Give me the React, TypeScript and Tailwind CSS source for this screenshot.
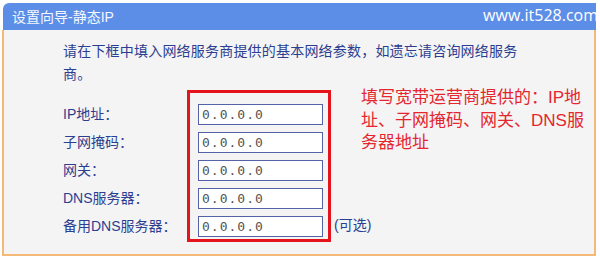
const fields = [
  { label: 'IP地址：', value: '0.0.0.0' },
  { label: '子网掩码：', value: '0.0.0.0' },
  { label: '网关：', value: '0.0.0.0' },
  { label: 'DNS服务器：', value: '0.0.0.0' },
  { label: '备用DNS服务器：', value: '0.0.0.0' },
]

const cjk = { fontFamily: '"Liberation Sans", "Noto Sans CJK SC", sans-serif' }

export default function App() {
  return (
    <div className="w-[600px] h-[257px] bg-white overflow-hidden" style={cjk}>
      <div className="ml-[2px] mt-[3px] w-[594px]">
        <div className="h-[27px] ml-[1px] flex items-center justify-between bg-[#5d8ee7] rounded-tl-[6px] pl-[9px]">
          <span className="text-[14px] text-[#f4f7ff] leading-none">设置向导-静态IP</span>
          <span
            className="text-[16px] text-white leading-none -mt-[4px] mr-[-2px]"
            style={{ fontFamily: '"Open Sans", sans-serif' }}
          >
            www.it528.com
          </span>
        </div>

        <div className="bg-[#f4f4f4] border-x-2 border-b-2 border-[#f5b977] pl-[59px] pt-[10px] pb-[12px]">
          <p className="text-[14px] leading-[23px] text-[#2b3e91] tracking-[0.2px]">
            请在下框中填入网络服务商提供的基本网络参数，如遗忘请咨询网络服务
            <br />
            商。
          </p>

          <div className="flex items-start mt-[4px]">
            <div className="w-[124px] pt-[14px] flex flex-col gap-[7px]">
              {fields.map((f) => (
                <div key={f.label} className="h-[21px] flex items-center text-[14px] text-[#2b3e91]">
                  {f.label}
                </div>
              ))}
            </div>

            <div className="border-[3px] border-[#e5141c] pt-[11px] pb-[2px] pl-[8px] pr-[5px] flex flex-col gap-[7px]">
              {fields.map((f) => (
                <div
                  key={f.label}
                  className="w-[125px] h-[21px] border-[1.5px] border-[#5462a8] bg-white flex items-center pl-[3px] text-[13px] text-[#555] tracking-[1px]"
                  style={{ fontFamily: '"DejaVu Sans Mono", monospace' }}
                >
                  {f.value}
                </div>
              ))}
            </div>

            <div className="flex flex-col self-stretch justify-between pl-[3px] pb-[6px]">
              <div className="pl-[27px] -mt-[3px] text-[17px] leading-[22.5px] text-[#e5262f] whitespace-nowrap">
                填写宽带运营商提供的：IP地
                <br />
                址、子网掩码、网关、DNS服
                <br />
                务器地址
              </div>
              <span className="text-[14px] text-[#2b3e91]">(可选)</span>
            </div>
          </div>
        </div>
      </div>
      <div className="ml-[557px] mt-[1px] w-[36px] h-[3px] bg-[#dfe6fb]" />
    </div>
  )
}
